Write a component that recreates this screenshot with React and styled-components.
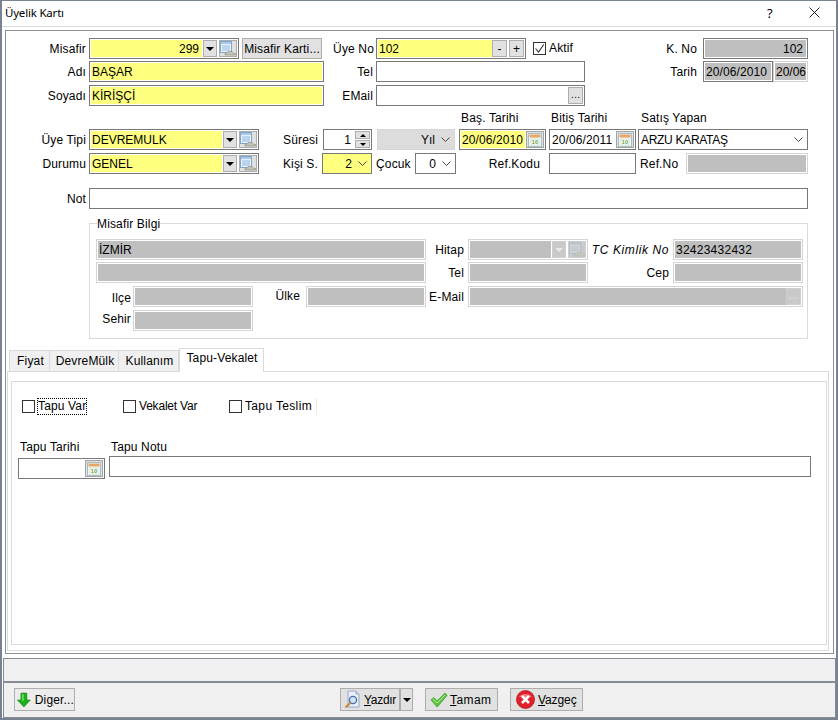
import styled, { createGlobalStyle } from 'styled-components';

const Global = createGlobalStyle`
  html, body { margin: 0; padding: 0; background: #fff; }
  body { font-family: "Liberation Sans", Arial, sans-serif; font-size: 12px; color: #000; letter-spacing: 0.15px; }
`;

const YELLOW = '#ffff80';
const DISABLED = '#bfbfbf';

const Frame = styled.div`
  width: 838px;
  height: 720px;
  box-sizing: border-box;
  border: 2px solid #79838f;
  border-top-width: 1px;
  background: #fff;
  overflow: hidden;
`;

const TitleBar = styled.div`
  box-sizing: content-box;
  height: 23px;
  display: flex;
  align-items: center;
  padding: 0 0 2px 3px;
  border-bottom: 1px solid #dcdcdc;
  font-family: "Noto Sans", "Open Sans", sans-serif;
  font-size: 11.5px;
`;

const TitleText = styled.span`
  flex: 1;
  letter-spacing: -0.2px;
`;

const TitleHelp = styled.span`
  width: 10px;
  margin-right: 32px;
  font-size: 13px;
`;

const TitleClose = styled.svg`
  width: 11px;
  height: 11px;
  margin-right: 16px;
`;

const Client = styled.div`
  width: 829px;
  height: 624px;
  box-sizing: border-box;
  margin: 3px 0 0 3px;
  border: 1px solid #8a8f96;
`;

const Row = styled.div`
  display: flex;
  height: ${(p) => p.$h || 21}px;
  margin-top: ${(p) => p.$mt || 0}px;
`;

const Label = styled.label`
  flex: none;
  box-sizing: border-box;
  width: ${(p) => p.$w}px;
  margin-left: ${(p) => p.$ml || 0}px;
  padding-right: ${(p) => (p.$left ? 0 : p.$pr ?? 3)}px;
  padding-bottom: ${(p) => p.$up || 0}px;
  padding-top: ${(p) => p.$down || 0}px;
  display: flex;
  align-items: center;
  justify-content: ${(p) => (p.$left ? 'flex-start' : 'flex-end')};
  font-style: ${(p) => (p.$italic ? 'italic' : 'normal')};
  letter-spacing: ${(p) => (p.$italic ? 0.6 : 0.15)}px;
  white-space: nowrap;
`;

const Caption = styled.span`
  flex: none;
  width: ${(p) => p.$w}px;
  margin-left: ${(p) => p.$ml || 0}px;
  white-space: nowrap;
  line-height: 14px;
`;

const Field = styled.div`
  flex: none;
  box-sizing: border-box;
  display: flex;
  width: ${(p) => p.$w}px;
  height: 21px;
  margin-left: ${(p) => p.$ml || 0}px;
  margin-top: ${(p) => p.$mt || 0}px;
  padding: 1px;
  background: #fff;
  border: 1px solid ${(p) => (p.$light ? '#d4d4d4' : '#787878')};
`;

const Fill = styled.div`
  flex: 1;
  min-width: 0;
  padding: 0 3px 0 1px;
  overflow: hidden;
  white-space: nowrap;
  line-height: 19px;
  letter-spacing: ${(p) => p.$track || 0}px;
  text-align: ${(p) => (p.$right ? 'right' : 'left')};
  background: ${(p) => p.$bg || '#fff'};
`;

const SideButton = styled.div`
  flex: none;
  box-sizing: border-box;
  width: ${(p) => p.$w || 15}px;
  margin-left: ${(p) => p.$ml ?? 1}px;
  display: flex;
  align-items: center;
  justify-content: center;
  background: ${(p) => (p.$off ? '#c9c9c9' : '#e1e1e1')};
  border: 1px solid ${(p) => (p.$off ? '#cfcfcf' : p.$dark ? '#a3a3a3' : '#adadad')};
  line-height: 1;
`;

const Caret = styled.span`
  width: 0;
  height: 0;
  border-left: 4px solid transparent;
  border-right: 4px solid transparent;
  border-top: 4px solid ${(p) => (p.$off ? '#e8e8e8' : '#000')};
`;

const Dots = styled.span`
  font-size: 11px;
  margin-top: -3px;
  color: ${(p) => (p.$off ? '#e8e8e8' : '#222')};
`;

const PushButton = styled.button`
  flex: none;
  box-sizing: border-box;
  width: ${(p) => p.$w}px;
  height: ${(p) => p.$h || 21}px;
  margin-left: ${(p) => p.$ml || 0}px;
  padding: 0;
  display: flex;
  align-items: center;
  justify-content: ${(p) => (p.$start ? 'flex-start' : 'center')};
  gap: ${(p) => p.$gap ?? 4}px;
  background: #e1e1e1;
  border: 1px solid #adadad;
  font: inherit;
  letter-spacing: ${(p) => p.$track ?? 0.15}px;
  color: #000;
  white-space: nowrap;
`;

const CheckItem = styled.div`
  flex: none;
  display: flex;
  align-items: center;
  width: ${(p) => p.$w}px;
  margin-left: ${(p) => p.$ml || 0}px;
`;

const Box = styled.span`
  flex: none;
  box-sizing: border-box;
  width: 13px;
  height: 13px;
  border: 1px solid #333;
  background: #fff;
  display: flex;
  align-items: center;
  justify-content: center;
`;

const CheckText = styled.span`
  margin-left: ${(p) => p.$gap ?? 3}px;
  padding: 1px 0;
  line-height: 15px;
  white-space: nowrap;
  letter-spacing: ${(p) => p.$track ?? 0.15}px;
  outline: ${(p) => (p.$focus ? '1px dotted #000' : 'none')};
  outline-offset: -1px;
  ${(p) => p.$focus && 'margin-left: 2px; padding: 1px 1px;'}
  ${(p) => p.$edge && 'width: 71px; border-right: 1px solid #f4e8d6;'}
`;

const SpinColumn = styled.div`
  flex: none;
  width: 15px;
  margin-left: 1px;
  display: flex;
  flex-direction: column;
  gap: 1px;
`;

const SpinButton = styled.div`
  flex: 1;
  display: flex;
  align-items: center;
  justify-content: center;
  background: #e1e1e1;
  border: 1px solid #adadad;
`;

const SpinDown = styled(Caret)`
  border-left-width: 3px;
  border-right-width: 3px;
  border-top-width: 3px;
`;

const SpinUp = styled(SpinDown)`
  border-top: 0;
  border-bottom: 3px solid #000;
`;

const SelectBox = styled.div`
  flex: none;
  box-sizing: border-box;
  display: flex;
  align-items: center;
  width: ${(p) => p.$w}px;
  margin-left: ${(p) => p.$ml || 0}px;
  height: 21px;
  padding: 1px 3px 0 2px;
  background: ${(p) => p.$bg || '#fff'};
  border: 1px solid ${(p) => (p.$off ? '#d6d6d6' : '#787878')};
`;

const SelectValue = styled.span`
  flex: 1;
  text-align: ${(p) => (p.$right ? 'right' : 'left')};
  white-space: nowrap;
  letter-spacing: ${(p) => p.$track || 0}px;
  padding-right: 6px;
`;

const ChevronSvg = styled.svg`
  flex: none;
  width: 9px;
  height: 6px;
  margin-right: 1px;
`;

const Group = styled.div`
  position: relative;
  box-sizing: border-box;
  width: 719px;
  height: 116px;
  margin: 14px 0 0 83px;
  border: 1px solid #dadada;
`;

const Legend = styled.span`
  position: absolute;
  top: -7px;
  left: 7px;
  line-height: 14px;
  background: #fff;
`;

const TabArea = styled.div`
  width: 822px;
  margin: 9px 0 0 1px;
`;

const TabStrip = styled.div`
  position: relative;
  z-index: 1;
  display: flex;
  align-items: flex-start;
  height: 24px;
  margin: 0 0 -1px 2px;
`;

const Tab = styled.div`
  box-sizing: border-box;
  width: ${(p) => p.$w}px;
  height: ${(p) => (p.$active ? 24 : 22)}px;
  margin-top: ${(p) => (p.$active ? 0 : 2)}px;
  padding: ${(p) => (p.$active ? 2 : 3)}px 0 0 ${(p) => (p.$active ? 1 : 2)}px;
  text-align: center;
  line-height: 15px;
  letter-spacing: 0.15px;
  background: ${(p) => (p.$active ? '#fff' : '#f0f0f0')};
  border: 1px solid #dadada;
  border-left-width: ${(p) => (p.$first || p.$active ? 1 : 0)}px;
  border-bottom-width: ${(p) => (p.$active ? 0 : 1)}px;
`;

const TabPage = styled.div`
  box-sizing: border-box;
  height: 280px;
  padding: 9px 1px 5px 3px;
  border: 1px solid #dadada;
`;

const InnerPanel = styled.div`
  box-sizing: border-box;
  height: 264px;
  border: 1px solid #dadada;
`;

const Footer = styled.div`
  box-sizing: border-box;
  width: 833px;
  height: 60px;
  margin: 4px 0 0 1px;
  background: #f0f0f0;
  border: 1px solid #868c96;
`;

const StatusBar = styled.div`
  height: 22px;
  border-bottom: 2px solid #868c96;
`;

const ButtonBar = styled.div`
  display: flex;
  padding-top: 5px;
`;

const FootButton = styled(PushButton)`
  height: 23px;
  padding-left: ${(p) => p.$pl || 0}px;
  background: ${(p) => p.$bg || '#e1e1e1'};
`;

const Chevron = () => (
  <ChevronSvg viewBox="0 0 9 6">
    <polyline points="0.5,0.5 4.5,4.5 8.5,0.5" fill="none" stroke="#444" strokeWidth="1" />
  </ChevronSvg>
);

const LookupIcon = ({ off }) => (
  <svg width="16" height="15" viewBox="0 0 16 15" style={{ opacity: off ? 0.3 : 1 }}>
    <rect x="0.5" y="0.5" width="11" height="11" fill="#eaf3fb" stroke="#7fa6cf" />
    <rect x="1" y="1" width="10" height="2" fill="#a9c8e8" />
    <path d="M2 5h8M2 7h8M2 9h8" stroke="#8fb4dc" />
    <path d="M6 12.5 L8 10.5 H12 L14 12.5 H15.5 V14 H5 V12.5 Z" fill="#c2c4b4" stroke="#85877b" strokeWidth="0.6" />
  </svg>
);

const CalendarIcon = () => (
  <svg width="14" height="14" viewBox="0 0 14 14">
    <rect x="0.5" y="0.5" width="13" height="13" fill="#eef6f8" stroke="#a9bcc8" />
    <rect x="1.5" y="1.5" width="11" height="3" fill="#e6a565" />
    <rect x="3" y="6" width="8" height="6" fill="#fff" stroke="#b7d2a8" strokeWidth="0.5" />
    <text x="7" y="11.2" textAnchor="middle" fontSize="5.5" fontWeight="bold" fontFamily="Liberation Sans" fill="#5c9a3c">10</text>
  </svg>
);

const DateField = ({ w, ml, mt, value, yellow }) => (
  <Field $w={w} $ml={ml} $mt={mt}>
    <Fill $bg={yellow ? YELLOW : '#fff'} $track={0.1}>{value}</Fill>
    <SideButton $w={18} $ml={1} $dark>
      <CalendarIcon />
    </SideButton>
  </Field>
);

const LookupField = ({ w, value, right, off, yellow = true }) => (
  <Field $w={w} $light={off}>
    <Fill $bg={off ? DISABLED : yellow ? YELLOW : '#fff'} $right={right}>{value}</Fill>
    <SideButton $off={off} $w={14}>
      <Caret $off={off} />
    </SideButton>
    <SideButton $off={off} $w={18} $ml={2}>
      <LookupIcon off={off} />
    </SideButton>
  </Field>
);

const GreyField = ({ w, value, right, dark, ml, track }) => (
  <Field $w={w} $ml={ml} $light={!dark}>
    <Fill $bg={DISABLED} $right={right} $track={track}>{value}</Fill>
  </Field>
);

const ArrowDownIcon = () => (
  <svg width="14" height="16" viewBox="0 0 14 16">
    <path d="M4 1 H10 V8 H13.5 L7 15 L0.5 8 H4 Z" fill="#1cb01c" stroke="#0d7a0d" strokeWidth="0.6" />
    <path d="M5 2 H7 V9 H5 Z" fill="#5fdc4f" />
  </svg>
);

const PrintIcon = () => (
  <svg width="20" height="19" viewBox="0 0 20 19">
    <path d="M5 1 H13 L16 4 V17 H5 Z" fill="#e8eefa" stroke="#9aa8cc" />
    <path d="M13 1 V4 H16" fill="#ccd6ee" stroke="#9aa8cc" />
    <circle cx="10" cy="10" r="3.6" fill="#cfe3f6" stroke="#4d6f9c" strokeWidth="1.3" />
    <path d="M7.4 12.8 L2.5 17.5" stroke="#c98a3a" strokeWidth="2.2" />
  </svg>
);

const CheckIcon = () => (
  <svg width="18" height="16" viewBox="0 0 18 16">
    <path d="M1 8 L4 5.5 L7 9 L15 1 L17 3.5 L7.2 15 Z" fill="#5fc63f" stroke="#3c9a2a" strokeWidth="0.8" />
    <path d="M3 7 L7 11 L15 3" fill="none" stroke="#a8ec8c" strokeWidth="1" />
  </svg>
);

const CancelIcon = () => (
  <svg width="19" height="19" viewBox="0 0 19 19">
    <circle cx="9.5" cy="9.5" r="9" fill="#e2202c" stroke="#b01820" strokeWidth="0.8" />
    <path d="M3 7 A7.5 6 0 0 1 16 7 Z" fill="#f47a80" />
    <path d="M6 6 L13 13 M13 6 L6 13" stroke="#fff" strokeWidth="2.6" />
  </svg>
);

export default function App() {
  return (
    <>
      <Global />
      <Frame>
        <TitleBar>
          <TitleText>Üyelik Kartı</TitleText>
          <TitleHelp>?</TitleHelp>
          <TitleClose viewBox="0 0 11 11">
            <path d="M0.5 0.5 L10.5 10.5 M10.5 0.5 L0.5 10.5" stroke="#222" strokeWidth="1" />
          </TitleClose>
        </TitleBar>

        <Client>
          <Row $mt={7}>
            <Label $w={83}>Misafir</Label>
            <LookupField w={150} value="299" right />
            <PushButton $w={80} $ml={3}>Misafir Karti...</PushButton>
            <Label $w={54} $pr={2}>Üye No</Label>
            <Field $w={150}>
              <Fill $bg={YELLOW}>102</Fill>
              <SideButton $ml={0}>-</SideButton>
              <SideButton $ml={2}>+</SideButton>
            </Field>
            <CheckItem $w={124} $ml={7}>
              <Box>
                <svg width="11" height="11" viewBox="0 0 11 11">
                  <polyline points="1.5,5.5 4.5,9 9.8,1.5" fill="none" stroke="#333" strokeWidth="1.1" />
                </svg>
              </Box>
              <CheckText>Aktif</CheckText>
            </CheckItem>
            <Label $w={46} $pr={6}>K. No</Label>
            <GreyField w={105} value="102" right dark />
          </Row>

          <Row $mt={2}>
            <Label $w={83}>Adı</Label>
            <Field $w={235}><Fill $bg={YELLOW}>BAŞAR</Fill></Field>
            <Label $w={52}>Tel</Label>
            <Field $w={209}><Fill /></Field>
            <Label $w={118} $pr={6}>Tarih</Label>
            <GreyField w={70} value="20/06/2010" dark track={0.1} />
            <GreyField w={35} value="20/06" />
          </Row>

          <Row $mt={3}>
            <Label $w={83}>Soyadı</Label>
            <Field $w={235}><Fill $bg={YELLOW}>KİRİŞÇİ</Fill></Field>
            <Label $w={52}>EMail</Label>
            <Field $w={209}>
              <Fill />
              <SideButton><Dots>...</Dots></SideButton>
            </Field>
          </Row>

          <Row $mt={5} $h={14}>
            <Caption $w={90} $ml={455}>Baş. Tarihi</Caption>
            <Caption $w={90}>Bitiş Tarihi</Caption>
            <Caption $w={100}>Satış Yapan</Caption>
          </Row>

          <Row $mt={4}>
            <Label $w={83}>Üye Tipi</Label>
            <LookupField w={170} value="DEVREMULK" />
            <Label $w={64} $pr={5}>Süresi</Label>
            <Field $w={49}>
              <Fill $right>1</Fill>
              <SpinColumn>
                <SpinButton><SpinUp /></SpinButton>
                <SpinButton><SpinDown /></SpinButton>
              </SpinColumn>
            </Field>
            <SelectBox $w={78} $ml={5} $bg="#dcdcdc" $off>
              <SelectValue $right>Yıl</SelectValue>
              <Chevron />
            </SelectBox>
            <DateField w={87} ml={4} value="20/06/2010" yellow />
            <DateField w={87} ml={3} value="20/06/2011" />
            <SelectBox $w={170} $ml={2}>
              <SelectValue $track={-0.3}>ARZU KARATAŞ</SelectValue>
              <Chevron />
            </SelectBox>
          </Row>

          <Row $mt={3}>
            <Label $w={83}>Durumu</Label>
            <LookupField w={170} value="GENEL" />
            <Label $w={63} $pr={4}>Kişi S.</Label>
            <SelectBox $w={50} $bg={YELLOW}>
              <SelectValue $right>2</SelectValue>
              <Chevron />
            </SelectBox>
            <Label $w={39} $ml={4} $left>Çocuk</Label>
            <SelectBox $w={41}>
              <SelectValue $right>0</SelectValue>
              <Chevron />
            </SelectBox>
            <Label $w={93} $pr={9}>Ref.Kodu</Label>
            <Field $w={87}><Fill /></Field>
            <Label $w={46} $ml={4} $left>Ref.No</Label>
            <GreyField w={122} />
          </Row>

          <Row $mt={14}>
            <Label $w={83}>Not</Label>
            <Field $w={719}><Fill /></Field>
          </Row>

          <Group>
            <Legend>Misafir Bilgi</Legend>
            <Row $mt={15}>
              <GreyField w={330} ml={6} value="İZMİR" />
              <Label $w={42} $pr={4}>Hitap</Label>
              <LookupField w={120} off />
              <Label $w={85} $pr={4} $italic>TC Kimlik No</Label>
              <GreyField w={130} value="32423432432" track={0.25} />
            </Row>
            <Row $mt={2}>
              <GreyField w={330} ml={6} />
              <Label $w={42} $pr={4}>Tel</Label>
              <GreyField w={120} />
              <Label $w={85} $pr={4}>Cep</Label>
              <GreyField w={130} />
            </Row>
            <Row $mt={3}>
              <Label $w={43} $pr={2} $down={3}>Ilçe</Label>
              <GreyField w={120} />
              <Label $w={53} $pr={6} $up={2}>Ülke</Label>
              <GreyField w={120} />
              <Label $w={42} $pr={4}>E-Mail</Label>
              <Field $w={335} $light>
                <Fill $bg={DISABLED} />
                <SideButton $ml={0} $off><Dots $off>...</Dots></SideButton>
              </Field>
            </Row>
            <Row $mt={3}>
              <Label $w={43} $pr={2} $up={3}>Sehir</Label>
              <GreyField w={120} />
            </Row>
          </Group>

          <TabArea>
            <TabStrip>
              <Tab $w={41} $first>Fiyat</Tab>
              <Tab $w={69}>DevreMülk</Tab>
              <Tab $w={60}>Kullanım</Tab>
              <Tab $w={85} $active>Tapu-Vekalet</Tab>
            </TabStrip>
            <TabPage>
              <InnerPanel>
                <Row $mt={16} $h={17}>
                  <CheckItem $w={101} $ml={10}>
                    <Box />
                    <CheckText $focus>Tapu Var</CheckText>
                  </CheckItem>
                  <CheckItem $w={106}>
                    <Box />
                    <CheckText $track={-0.2}>Vekalet Var</CheckText>
                  </CheckItem>
                  <CheckItem $w={100}>
                    <Box />
                    <CheckText $edge $track={0.35}>Tapu Teslim</CheckText>
                  </CheckItem>
                </Row>
                <Row $mt={25} $h={14}>
                  <Caption $w={91} $ml={8}>Tapu Tarihi</Caption>
                  <Caption $w={100}>Tapu Notu</Caption>
                </Row>
                <Row $mt={2} $h={23}>
                  <DateField w={87} ml={6} mt={2} />
                  <Field $w={702} $ml={4}><Fill /></Field>
                </Row>
              </InnerPanel>
            </TabPage>
          </TabArea>
        </Client>

        <Footer>
          <StatusBar />
          <ButtonBar>
            <FootButton $w={61} $ml={10} $bg="#ececec" $start $pl={2}>
              <ArrowDownIcon />
              <span>Di<u>g</u>er...</span>
            </FootButton>
            <FootButton $w={60} $ml={265} $start $pl={2} $gap={1} $track={-0.3}>
              <PrintIcon />
              <span><u>Y</u>azdır</span>
            </FootButton>
            <FootButton $w={13}>
              <Caret />
            </FootButton>
            <FootButton $w={73} $ml={12} $start $pl={4} $gap={2} $track={0.4}>
              <CheckIcon />
              <span><u>T</u>amam</span>
            </FootButton>
            <FootButton $w={73} $ml={12} $start $pl={5} $gap={3} $track={-0.1}>
              <CancelIcon />
              <span><u>V</u>azgeç</span>
            </FootButton>
          </ButtonBar>
        </Footer>
      </Frame>
    </>
  );
}
